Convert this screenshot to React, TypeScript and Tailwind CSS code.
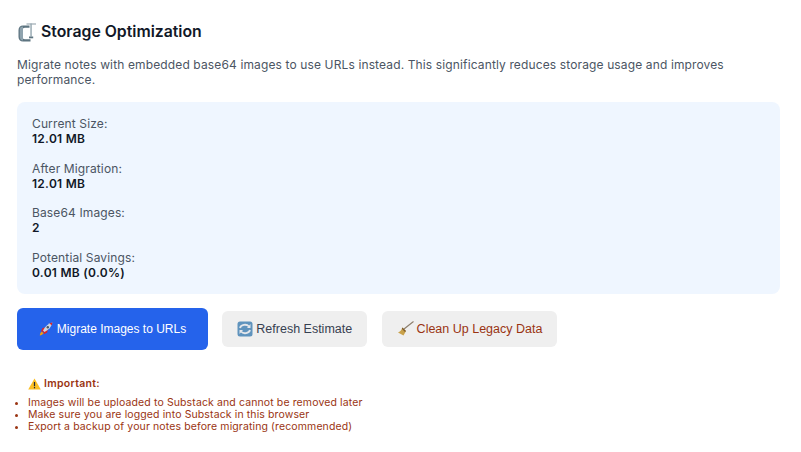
import React from 'react'

function ClampIcon() {
  return (
    <svg width="20" height="22" viewBox="0 0 20 22" className="shrink-0">
      <path d="M12.500 4.500H6C3.200 4.500 1.500 6.300 1.500 9v7c0 2.700 1.700 4.500 4.500 4.500h7.500v-2.200H8c-1.700 0-2.700-1-2.700-2.700V9.300C5.300 7.700 6.300 6.800 8 6.800h4.500z" fill="#5d7480" />
      <path d="M2.800 8c.4-1.600 1.500-2.400 3.200-2.400v13.800C4 19.400 2.800 18 2.800 16z" fill="#8fa3ae" />
      <rect x="9.500" y="2.500" width="9.500" height="1" fill="#8a9aa3" />
      <rect x="13.300" y="2.500" width="1.500" height="13" fill="#9aabb4" />
      <rect x="12" y="15.500" width="4.200" height="1.800" fill="#5d7480" />
    </svg>
  )
}

function RocketIcon() {
  return (
    <svg width="14" height="14" viewBox="0 0 14 14" className="shrink-0">
      <path d="M.800 13.500c.2-2 .8-3.200 2-4l1.700 1.700c-.8 1.200-1.900 2-3.700 2.300z" fill="#f59e0b" />
      <path d="M2 9.200l1.500-3.200 3-.500-2 4.500z" fill="#dc2626" />
      <path d="M5 12.200l3.200-1.600.500-3-4.500 2z" fill="#dc2626" />
      <path d="M4 8.500C6 4.500 9 1.500 13.500.500 12.500 5 9.500 8 5.500 10z" fill="#cbd5e1" />
      <path d="M10.500 1.200l2.900-.700-.700 2.900z" fill="#dc2626" />
      <circle cx="8.800" cy="5.200" r="1.200" fill="#475569" />
    </svg>
  )
}

function RefreshIcon() {
  return (
    <svg width="16" height="16" viewBox="0 0 16 16" className="shrink-0">
      <rect x="0.500" y="0.500" width="15" height="15" rx="2.500" fill="#5f93bd" />
      <path d="M3 7a5 4 0 0 1 9-1.500" fill="none" stroke="#e5e7eb" strokeWidth="1.800" />
      <path d="M13 9a5 4 0 0 1-9 1.500" fill="none" stroke="#e5e7eb" strokeWidth="1.800" />
      <path d="M13.500 3v4h-3.500z" fill="#e5e7eb" />
      <path d="M2.500 13V9H6z" fill="#e5e7eb" />
    </svg>
  )
}

function BroomIcon() {
  return (
    <svg width="17" height="16" viewBox="0 0 17 16" className="shrink-0">
      <path d="M16.500 .500L7 8" stroke="#8b7d6b" strokeWidth="1.100" />
      <path d="M5.500 6.500L9 10 6.500 14.500 1 11.500C3 11 4.500 9 5.500 6.500z" fill="#c9a24b" />
      <path d="M5.500 6.500L9 10 8 11 4.800 7.800z" fill="#7c5a2e" />
    </svg>
  )
}

function WarningIcon() {
  return (
    <svg width="13" height="12" viewBox="0 0 13 12" className="shrink-0">
      <path d="M6.500 .500L12.800 11.500H.200z" fill="#fbbf24" />
      <rect x="5.900" y="4" width="1.200" height="4.200" fill="#1f2937" />
      <rect x="5.900" y="9" width="1.200" height="1.300" fill="#1f2937" />
    </svg>
  )
}

const stats = [
  { label: 'Current Size:', value: '12.01 MB' },
  { label: 'After Migration:', value: '12.01 MB' },
  { label: 'Base64 Images:', value: '2' },
  { label: 'Potential Savings:', value: '0.01 MB (0.0%)' },
]

export default function App() {
  return (
    <main className="min-h-screen bg-white px-[17px] pt-[21px] font-['Inter',sans-serif]">
      {/* Header */}
      <h2 className="flex items-center gap-1 text-[15.8px] leading-[22px] font-semibold text-[#111827]">
        <ClampIcon /> Storage Optimization
      </h2>
      <p className="mt-[14px] text-[12px] leading-[15px] tracking-[0.13px] text-[#4b5563]">
        Migrate notes with embedded base64 images to use URLs instead. This significantly reduces storage usage and improves performance.
      </p>

      {/* Stats */}
      <section className="mt-[15px] flex h-[192px] w-[763px] flex-col gap-[14px] rounded-lg bg-[#eff6ff] px-[15px] py-[14px]">
        {stats.map((s) => (
          <div key={s.label} className="text-[12px] leading-[15.25px] tracking-[0.13px]">
            <div className="text-[#4b5563]">{s.label}</div>
            <div className="font-semibold tracking-[0.28px] text-[#111827]">{s.value}</div>
          </div>
        ))}
      </section>

      {/* Actions */}
      <div className="mt-[14px] flex items-center gap-[14px] font-['Liberation_Sans',sans-serif]">
        <button className="flex h-[42px] w-[191px] items-center justify-center gap-1 rounded-md bg-[#2563eb] text-[12px] font-medium text-white">
          <RocketIcon /> Migrate Images to URLs
        </button>
        <button className="flex h-9 w-[145px] items-center justify-center gap-[3.5px] rounded-md bg-[#efefef] text-[12.5px] text-[#374151]">
          <RefreshIcon /> Refresh Estimate
        </button>
        <button className="ml-px flex h-9 w-[175px] items-center justify-center gap-[3px] rounded-md bg-[#efefef] text-[12.5px] text-[#9a3412]">
          <BroomIcon /> Clean Up Legacy Data
        </button>
      </div>

      {/* Warning */}
      <div className="mt-[28px] text-[10.5px] leading-3 tracking-[0.12px] text-[#9a3412]">
        <div className="flex items-center gap-[3px] pl-[11px] font-semibold tracking-[0.3px]">
          <WarningIcon /> Important:
        </div>
        <ul className="mt-[7px] list-disc pl-[11px]">
          <li>Images will be uploaded to Substack and cannot be removed later</li>
          <li>Make sure you are logged into Substack in this browser</li>
          <li>Export a backup of your notes before migrating (recommended)</li>
        </ul>
      </div>
    </main>
  )
}
